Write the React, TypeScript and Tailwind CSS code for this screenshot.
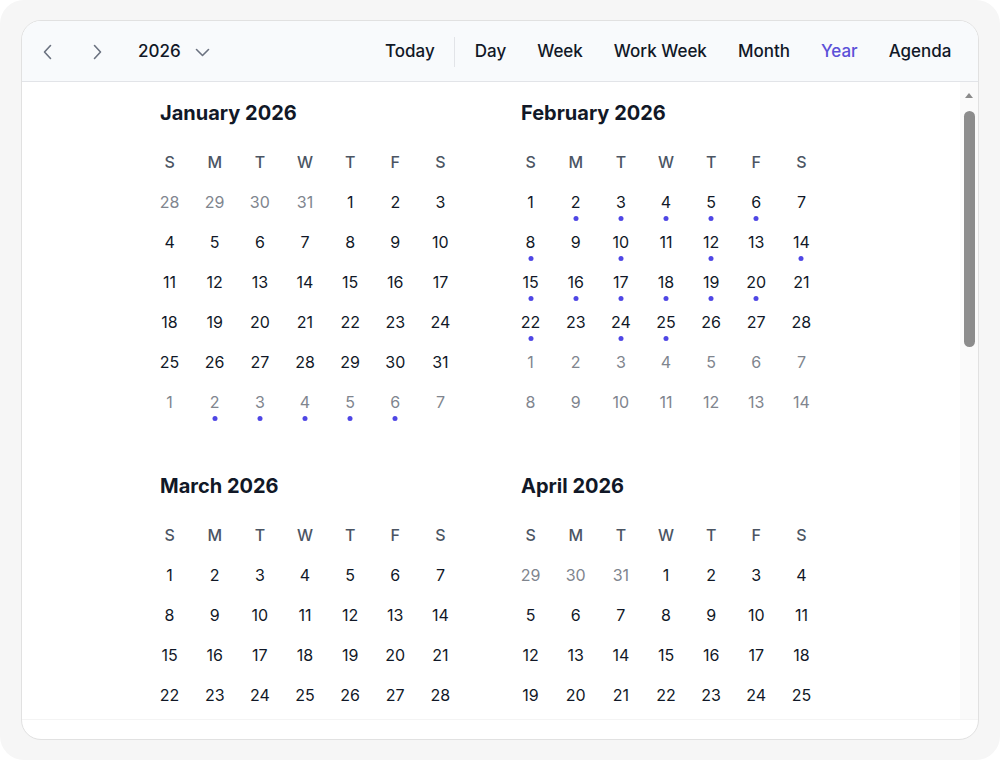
import { useMemo } from "react";

const MONTHS = [
  "January",
  "February",
  "March",
  "April",
  "May",
  "June",
  "July",
  "August",
  "September",
  "October",
  "November",
  "December",
];

const WEEKDAYS = ["S", "M", "T", "W", "T", "F", "S"];

// days that have something scheduled (month is 0-based)
const EVENTS = new Set(
  [2, 3, 4, 5, 6, 8, 10, 12, 14, 15, 16, 17, 18, 19, 20, 22, 24, 25].map(
    (d) => `2026-1-${d}`
  )
);

const VIEWS = ["Day", "Week", "Work Week", "Month", "Year", "Agenda"];

type Cell = { day: number; key: string; inMonth: boolean };

function buildMonth(year: number, month: number): Cell[] {
  const first = new Date(year, month, 1);
  const start = new Date(year, month, 1 - first.getDay());
  const cells: Cell[] = [];
  for (let i = 0; i < 42; i++) {
    const d = new Date(start.getFullYear(), start.getMonth(), start.getDate() + i);
    cells.push({
      day: d.getDate(),
      key: `${d.getFullYear()}-${d.getMonth()}-${d.getDate()}`,
      inMonth: d.getMonth() === month,
    });
  }
  return cells;
}

function Chevron({ dir }: { dir: "left" | "right" | "down" }) {
  if (dir === "down") {
    return (
      <svg width="15" height="9" viewBox="0 0 15 9" fill="none">
        <path
          d="M1.5 1.5 7.5 7.5 13.5 1.5"
          stroke="#6b7280"
          strokeWidth="1.6"
          strokeLinecap="round"
          strokeLinejoin="round"
        />
      </svg>
    );
  }
  return (
    <svg width="10" height="16" viewBox="0 0 10 16" fill="none">
      <path
        d={dir === "left" ? "M7.5 1.5 1.5 8 7.5 14.5" : "M2.5 1.5 8.5 8 2.5 14.5"}
        stroke="#6b7280"
        strokeWidth="1.6"
        strokeLinecap="round"
        strokeLinejoin="round"
      />
    </svg>
  );
}

function MonthGrid({ year, month }: { year: number; month: number }) {
  const cells = useMemo(() => buildMonth(year, month), [year, month]);

  return (
    <div className="w-[316px]">
      <h3 className="ml-[13px] h-7 text-[20px] font-bold leading-7 text-[#111827]">
        {MONTHS[month]} {year}
      </h3>
      <div className="mt-[15px] grid grid-cols-7">
        {WEEKDAYS.map((w, i) => (
          <div
            key={i}
            className="flex h-10 items-center justify-center text-[16px] font-medium text-[#4b5563]"
          >
            {w}
          </div>
        ))}
        {cells.map((c) => (
          <div key={c.key} className="relative flex h-10 items-center justify-center">
            <span
              className={
                c.inMonth
                  ? "text-[16px] text-[#111827]"
                  : "text-[16px] text-[#80858e]"
              }
            >
              {c.day}
            </span>
            {EVENTS.has(c.key) && (
              <span className="absolute left-1/2 top-[34px] h-[5px] w-[5px] -translate-x-1/2 rounded-full bg-[#4f46e5]" />
            )}
          </div>
        ))}
      </div>
    </div>
  );
}

export default function App() {
  const year = 2026;

  return (
    <div
      className="h-[760px] w-[1000px] bg-white"
      style={{ fontFamily: "Inter, 'Noto Sans', sans-serif" }}
    >
      <div className="flex h-full w-full rounded-[24px] bg-[#f6f6f6] px-[21px] py-[20px]">
        <div className="flex h-full w-full flex-col overflow-hidden rounded-[20px] border border-[#e1e1e1] bg-white">
          {/* Toolbar */}
          <div className="flex h-[61px] shrink-0 items-center border-b border-[#e2e4e8] bg-[#f8fafc] pl-2 pr-[11px] pt-[2px]">
            <button className="flex h-9 w-9 items-center justify-center rounded-md">
              <Chevron dir="left" />
            </button>
            <button className="ml-[13px] flex h-9 w-9 items-center justify-center rounded-md">
              <Chevron dir="right" />
            </button>
            <button className="ml-[23px] flex items-center gap-[14px] text-[17px] font-medium text-[#111827]">
              {year}
              <Chevron dir="down" />
            </button>

            <div className="ml-auto flex items-center">
              <button className="px-[15.5px] text-[17px] font-medium text-[#111827]">
                Today
              </button>
              <div className="mx-[4px] h-[30px] w-px bg-[#e2e4e8]" />
              {VIEWS.map((v) => (
                <button
                  key={v}
                  className={
                    v === "Year"
                      ? "px-[15.5px] text-[17px] font-medium text-[#5b50d8]"
                      : "px-[15.5px] text-[17px] font-medium text-[#111827]"
                  }
                >
                  {v}
                </button>
              ))}
            </div>
          </div>

          {/* Year grid + scrollbar */}
          <div className="flex min-h-0 flex-1">
            <div className="min-w-0 flex-1 overflow-hidden">
              <div className="grid grid-cols-[316px_316px] justify-center gap-x-[45px] gap-y-[50px] pb-10 pr-[11px] pt-[17px]">
                {MONTHS.map((_, m) => (
                  <MonthGrid key={m} year={year} month={m} />
                ))}
              </div>
            </div>
            <div className="flex w-[18px] shrink-0 flex-col items-center bg-[#fafafa] pt-[11px]">
              <div className="h-0 w-0 border-x-[4px] border-b-[5px] border-x-transparent border-b-[#8a8a8a]" />
              <div className="mt-[13px] h-[236px] w-[11px] rounded-full bg-[#8c8c8c]" />
            </div>
          </div>
          <div className="h-5 shrink-0 border-t border-[#f4f4f4]" />
        </div>
      </div>
    </div>
  );
}
